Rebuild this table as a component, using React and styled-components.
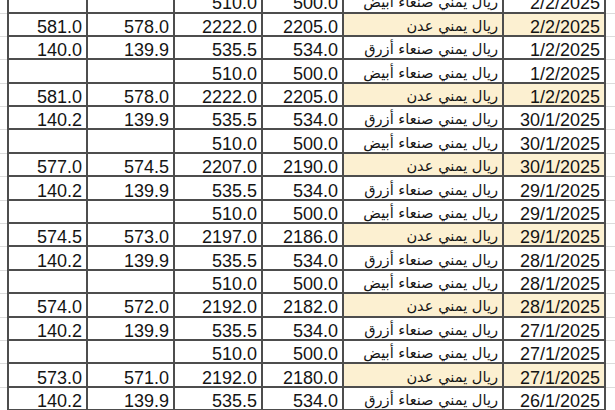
import React from "react";
import styled, { createGlobalStyle } from "styled-components";

const GlobalStyle = createGlobalStyle`
  html, body {
    margin: 0;
    padding: 0;
    background: #fff;
    overflow: hidden;
  }
  body {
    font-family: "Liberation Sans", Arial, sans-serif;
    color: #141414;
  }
`;

const WHITE = "ريال يمني صنعاء أبيض";
const BLUE = "ريال يمني صنعاء أزرق";
const ADEN = "ريال يمني عدن";

// columns left to right: a, b, c, d, name, date
const rows = [
  ["", "", "510.0", "500.0", WHITE, "2/2/2025"],
  ["581.0", "578.0", "2222.0", "2205.0", ADEN, "2/2/2025"],
  ["140.0", "139.9", "535.5", "534.0", BLUE, "1/2/2025"],
  ["", "", "510.0", "500.0", WHITE, "1/2/2025"],
  ["581.0", "578.0", "2222.0", "2205.0", ADEN, "1/2/2025"],
  ["140.2", "139.9", "535.5", "534.0", BLUE, "30/1/2025"],
  ["", "", "510.0", "500.0", WHITE, "30/1/2025"],
  ["577.0", "574.5", "2207.0", "2190.0", ADEN, "30/1/2025"],
  ["140.2", "139.9", "535.5", "534.0", BLUE, "29/1/2025"],
  ["", "", "510.0", "500.0", WHITE, "29/1/2025"],
  ["574.5", "573.0", "2197.0", "2186.0", ADEN, "29/1/2025"],
  ["140.2", "139.9", "535.5", "534.0", BLUE, "28/1/2025"],
  ["", "", "510.0", "500.0", WHITE, "28/1/2025"],
  ["574.0", "572.0", "2192.0", "2182.0", ADEN, "28/1/2025"],
  ["140.2", "139.9", "535.5", "534.0", BLUE, "27/1/2025"],
  ["", "", "510.0", "500.0", WHITE, "27/1/2025"],
  ["573.0", "571.0", "2192.0", "2180.0", ADEN, "27/1/2025"],
  ["140.2", "139.9", "535.5", "534.0", BLUE, "26/1/2025"],
];

const Sheet = styled.div`
  margin-top: -9.9px;
  width: 100%;
`;

const Row = styled.div`
  display: grid;
  grid-template-columns: 7px 81px 87px 88px 81px 160px 102px 1fr;
  height: 23.4px;
`;

const Gutter = styled.div`
  border-bottom: 1px solid #dcdcdc;
  height: 100%;
  box-sizing: border-box;
`;

const Cell = styled.div`
  box-sizing: border-box;
  height: 23.4px;
  border-right: 2px solid #4d4d4d;
  border-bottom: 2px solid #4d4d4d;
  border-left: ${(p) => (p.$first ? "2px solid #4d4d4d" : "none")};
  background: ${(p) => (p.$hl ? "#fcf0d1" : "transparent")};
  padding: 5.3px 4px 0 2px;
  font-size: 18px;
  line-height: 16.1px;
  text-align: right;
  white-space: nowrap;
  overflow: hidden;
`;

const NameCell = styled(Cell)`
  direction: rtl;
  text-align: start;
  font-family: "DejaVu Sans", "Liberation Sans", sans-serif;
  font-size: 14.6px;
  padding-top: 4.3px;
`;

export default function App() {
  return (
    <>
      <GlobalStyle />
      <Sheet>
        {rows.map((r, i) => {
          const aden = r[4] === ADEN;
          return (
            <Row key={i}>
              <Gutter />
              <Cell $first>{r[0]}</Cell>
              <Cell>{r[1]}</Cell>
              <Cell>{r[2]}</Cell>
              <Cell>{r[3]}</Cell>
              <NameCell $hl={aden}>{r[4]}</NameCell>
              <Cell $hl={aden}>{r[5]}</Cell>
              <Gutter />
            </Row>
          );
        })}
      </Sheet>
    </>
  );
}
